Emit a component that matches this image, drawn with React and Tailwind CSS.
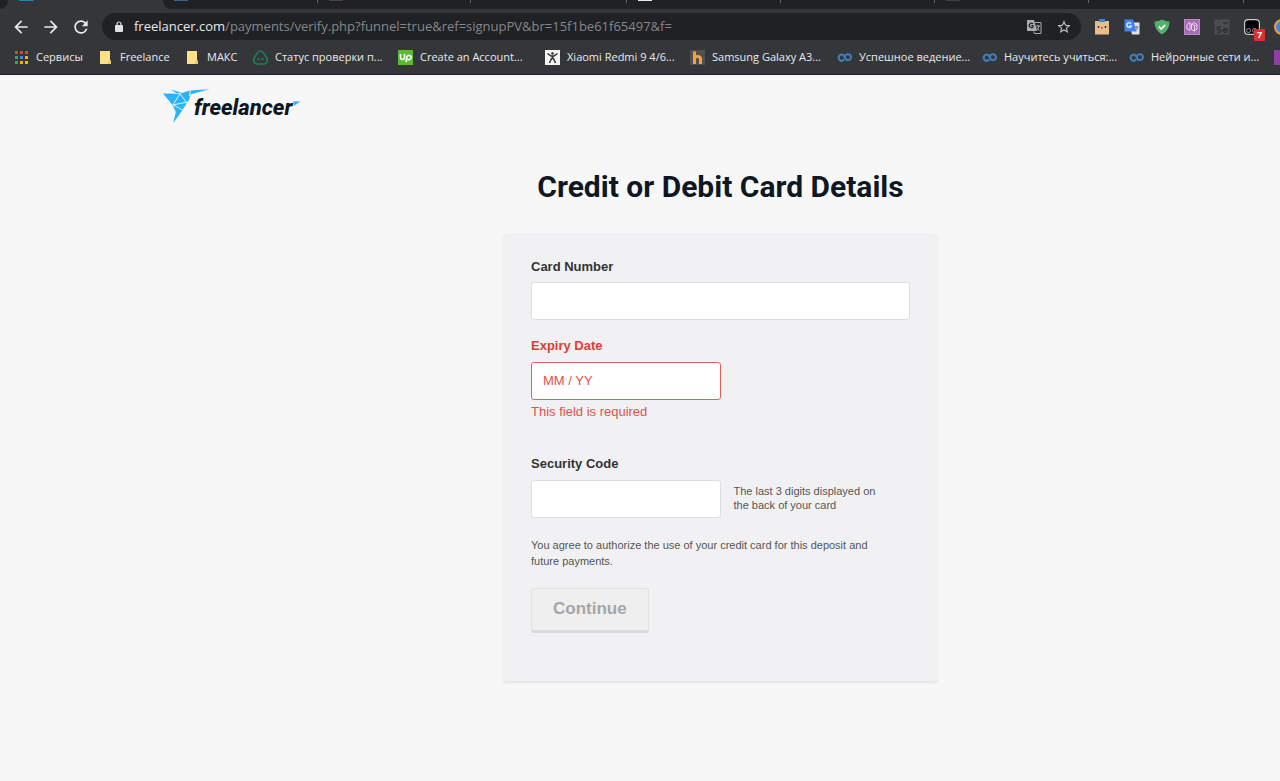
import React from 'react';
import { MdArrowBack, MdArrowForward, MdRefresh, MdStarBorder } from 'react-icons/md';

const AppsIcon = () => (
  <svg className="w-[15px] h-[15px] shrink-0" viewBox="0 0 15 15">
    <g fill="#db4437">
      <rect x="1" y="1" width="3" height="3" />
      <rect x="6" y="1" width="3" height="3" />
      <rect x="11" y="1" width="3" height="3" />
    </g>
    <rect x="1" y="6" width="3" height="3" fill="#34a853" />
    <rect x="6" y="6" width="3" height="3" fill="#4285f4" />
    <rect x="11" y="6" width="3" height="3" fill="#f4b400" />
    <rect x="1" y="11" width="3" height="3" fill="#34a853" />
    <rect x="6" y="11" width="3" height="3" fill="#f4b400" />
    <rect x="11" y="11" width="3" height="3" fill="#f4b400" />
  </svg>
);

const FolderIcon = () => (
  <svg className="w-[15px] h-[15px] shrink-0" viewBox="0 0 15 15">
    <path d="M2 1h10v9l1 1v3H2z" fill="#fbe08a" />
    <path d="M10 11h3v3h-3z" fill="#f0cd62" />
  </svg>
);

const StatusIcon = () => (
  <svg className="w-[15px] h-[15px] shrink-0 overflow-visible" viewBox="0 0 15 15" fill="none">
    <path
      d="M7.500 1C9.500 1 10.500 2.500 11.600 4.400C13 6.500 14.300 8.300 14.300 10.200C14.300 12.800 12.300 14 10 14H5C2.700 14 .7 12.800 .7 10.200C.7 8.300 2 6.500 3.400 4.400C4.500 2.500 5.500 1 7.500 1z"
      stroke="#1a7f56"
      strokeWidth="1.700"
    />
    <circle cx="5.500" cy="9" r="1.200" fill="#1a7f56" />
    <circle cx="9.500" cy="9" r="1.200" fill="#1a7f56" />
  </svg>
);

const UpworkIcon = () => (
  <svg className="w-[15px] h-[15px] shrink-0" viewBox="0 0 15 15" fill="none">
    <rect width="15" height="15" fill="#5bbc2f" />
    <path d="M2.500 4v3.500a2 2 0 0 0 4 0V4M8 12l1-5.500A2.200 2.200 0 1 1 9.500 9.200" stroke="#fff" strokeWidth="1.600" />
  </svg>
);

const FigureIcon = () => (
  <svg className="w-[15px] h-[15px] shrink-0" viewBox="0 0 15 15" fill="none">
    <rect width="15" height="15" fill="#f4f4f4" />
    <circle cx="7.500" cy="3.500" r="1.300" fill="#333" />
    <path d="M2.500 3.500L6 6h3l3.500-2.500M7.500 6v3M4.500 13L6.500 8.500h2l2 4.500" stroke="#333" strokeWidth="1.500" />
  </svg>
);

const HotlineIcon = () => (
  <svg className="w-[15px] h-[15px] shrink-0" viewBox="0 0 15 15" fill="none">
    <rect width="15" height="15" fill="#4d4f55" />
    <path d="M4.500 1.500v12.500M4.500 8.500Q4.500 6.500 7.500 6.500Q10.500 6.500 10.500 9v5" stroke="#f2a33c" strokeWidth="3" />
  </svg>
);

const CourseraIcon = () => (
  <svg className="w-[15px] h-[15px] shrink-0 overflow-visible" viewBox="0 0 15 15" fill="none">
    <path
      d="M6.800 9.800A3 3 0 1 1 6.500 5.300C8 6.800 8 8.200 9.200 9.600A3 3 0 1 0 8.400 5.600"
      stroke="#3f80bd"
      strokeWidth="2"
      strokeLinecap="round"
    />
  </svg>
);

const bookmarks = [
  { title: 'Сервисы', icon: AppsIcon, width: 'w-[84px]' },
  { title: 'Freelance', icon: FolderIcon, width: 'w-[87px]' },
  { title: 'МАКС', icon: FolderIcon, width: 'w-[68px]' },
  { title: 'Статус проверки п...', icon: StatusIcon, width: 'w-[145px]' },
  { title: 'Create an Account...', icon: UpworkIcon, width: 'w-[147px]' },
  { title: 'Xiaomi Redmi 9 4/6...', icon: FigureIcon, width: 'w-[145px]' },
  { title: 'Samsung Galaxy A3...', icon: HotlineIcon, width: 'w-[147px]' },
  { title: 'Успешное ведение...', icon: CourseraIcon, width: 'w-[145px]' },
  { title: 'Научитесь учиться:...', icon: CourseraIcon, width: 'w-[147px]' },
  { title: 'Нейронные сети и...', icon: CourseraIcon, width: 'w-[145px]' },
];

const tabs = [
  { id: 1, width: 'w-[155px]', favicon: 'bg-[#3c5f80]' },
  { id: 2, width: 'w-[153px]', favicon: 'bg-[#4a4340]' },
  { id: 3, width: 'w-[156px]', favicon: 'bg-transparent' },
  { id: 4, width: 'w-[154px]', favicon: 'bg-[#e8e8e8]' },
  { id: 5, width: 'w-[154px]', favicon: 'bg-transparent' },
  { id: 6, width: 'w-[154px]', favicon: 'bg-[#3d3e42]' },
  { id: 7, width: 'w-[155px]', favicon: 'bg-transparent' },
];

const TranslateIcon = () => (
  <svg className="w-4 h-4" viewBox="0 0 16 16" fill="none">
    <path d="M1 1h7l3 11H1z" fill="#a9adb2" />
    <path d="M9 3.500h6v11H8.500l-1-2" stroke="#a9adb2" />
    <path d="M7 4.800A2.200 2.200 0 1 0 7 8V6.500H5.200" stroke="#202124" strokeWidth="1.200" />
    <path d="M9.500 7h4.500M11.800 5.800V7M13.200 7Q12.500 9.500 10.500 11M10.800 8.500Q11.800 10.500 13.500 11.500" stroke="#a9adb2" />
  </svg>
);

const Extensions = () => (
  <div className="flex items-center gap-[14px] pl-[13px]">
    <button aria-label="Box">
      <svg className="w-4 h-4" viewBox="0 0 16 16">
        <rect x="1" y="2" width="14" height="13.500" fill="#e9bd8a" />
        <path d="M5 0h6v3H5z" fill="#2b8fe0" />
        <circle cx="4.500" cy="8" r=".9" fill="#2d2723" />
        <circle cx="11.500" cy="8" r=".9" fill="#2d2723" />
        <path d="M6.800 8.500h2.400L8 9.800z" fill="#2d2723" />
      </svg>
    </button>
    <button aria-label="Google Translate">
      <svg className="w-4 h-4" viewBox="0 0 16 16" fill="none">
        <path d="M5 3.500h10.500V15.500H8z" fill="#dfe3e8" />
        <path d="M.5 .5h8.500l3.500 12H.5z" fill="#4583ec" />
        <path d="M7 4.600A2.300 2.300 0 1 0 7.300 7H5.300" stroke="#fff" strokeWidth="1.200" />
        <path d="M10.500 8h4M12.500 7v1M13.500 8Q13 10.500 11.500 12" stroke="#6b7684" />
      </svg>
    </button>
    <button aria-label="Protection">
      <svg className="w-4 h-4" viewBox="0 0 16 16" fill="none">
        <path d="M8 .5Q11.500 2.500 15.500 2.500Q15.500 11.500 8 15.500Q.5 11.500 .5 2.500Q4.500 2.500 8 .5z" fill="#4fb268" />
        <path d="M4.800 7.500L7.200 10L11.300 5.800" stroke="#fff" strokeWidth="1.700" />
      </svg>
    </button>
    <button aria-label="Documents">
      <svg className="w-4 h-4" viewBox="0 0 16 16" fill="none">
        <rect x=".5" y=".5" width="15" height="15" fill="#a56bb4" stroke="#b98ac6" />
        <path d="M3 5.500l3-2v8L3 10zM7.500 5l2.500-1.500 3 2V10l-2.500 2-3-1.500zM7.500 5l3 1.500V12M10.500 6.500l2.500-1" stroke="#e6d3ec" />
      </svg>
    </button>
    <button aria-label="Selenium">
      <svg className="w-4 h-4" viewBox="0 0 16 16" fill="none">
        <rect x=".5" y=".5" width="15" height="15" fill="#4c4d50" />
        <path d="M7 8H4.500a1.200 1.200 0 0 0 0 2.600h1.200a1.200 1.200 0 0 1 0 2.600H3M9.500 11h4A2 2 0 1 0 12.800 12.800M9 4h5" stroke="#2f3033" strokeWidth="1.400" />
      </svg>
    </button>
    <button aria-label="Monkey scripts" className="relative">
      <svg className="w-4 h-4" viewBox="0 0 16 16" fill="none">
        <rect x=".6" y=".6" width="14.800" height="14.800" rx="3.500" fill="#000" stroke="#c9c9c9" strokeWidth="1.200" />
        <circle cx="4.500" cy="11.500" r="2" stroke="#9a9a9a" />
        <circle cx="10.500" cy="11.500" r="2" stroke="#9a9a9a" />
      </svg>
      <span className="absolute left-[10px] top-[10px] w-[11px] h-[12px] rounded-[1px] bg-[#dc2f2f] text-white text-[9px] leading-[12px] font-bold text-center">
        7
      </span>
    </button>
    <div className="w-4 h-4 shrink-0 rounded-full bg-[#4285f4] border-2 border-[#e9a23b]" />
  </div>
);

const Browser = () => (
  <header className="bg-[#35363a] border-b border-[#1f2023] overflow-hidden font-['Open_Sans','Noto_Sans',sans-serif]">
    <div className="flex h-[9px] overflow-hidden">
      <div className="w-[8px] shrink-0 bg-[#202124] rounded-br-lg" />
      <div className="w-[155px] shrink-0 pl-[11px]">
        <div className="w-[15px] h-px rounded-b-sm bg-[#2a7fb5]" />
      </div>
      <div className="flex grow bg-[#202124] rounded-bl-lg overflow-hidden">
        {tabs.map((tab) => (
          <div key={tab.id} className={`${tab.width} shrink-0 flex justify-between pl-[11px]`}>
            <div className={`w-[14px] h-px ${tab.favicon}`} />
            <div className="w-px h-[3px] bg-[#5f6368]" />
          </div>
        ))}
      </div>
    </div>

    <div className="flex items-center h-[35px] text-[#e8eaed]">
      <div className="flex items-center gap-[10px] px-[11px] shrink-0">
        <button aria-label="Back">
          <MdArrowBack className="w-5 h-5" />
        </button>
        <button aria-label="Forward">
          <MdArrowForward className="w-5 h-5" />
        </button>
        <button aria-label="Reload">
          <MdRefresh className="w-5 h-5" />
        </button>
      </div>
      <div className="flex items-center grow min-w-0 h-[27px] rounded-full bg-[#202124] pl-[12px] pr-[9px]">
        <svg className="w-[10px] h-3 shrink-0" viewBox="0 0 10 12" fill="none">
          <rect x="1" y="4" width="8" height="7" rx="1" fill="#dfe1e5" />
          <path d="M3 4.500V3a2 2 0 0 1 4 0v1.500" stroke="#dfe1e5" strokeWidth="1.200" />
        </svg>
        <div className="grow min-w-0 truncate pl-[10px] text-[13px] text-[#85888c]">
          <span className="text-[#e8eaed]">freelancer.com</span>
          /payments/verify.php?funnel=true&amp;ref=signupPV&amp;br=15f1be61f65497&amp;f=
        </div>
        <div className="flex items-center gap-[14px] shrink-0">
          <button aria-label="Translate page">
            <TranslateIcon />
          </button>
          <button aria-label="Bookmark page">
            <MdStarBorder className="w-4 h-4 text-[#c4c7cb]" />
          </button>
        </div>
      </div>
      <div className="w-[199px] shrink-0 overflow-visible">
        <Extensions />
      </div>
    </div>

    <nav className="flex h-[30px] pb-[4px] pl-[14px] text-[11px] text-[#e8eaed] whitespace-nowrap">
      {bookmarks.map((bookmark) => (
        <a key={bookmark.title} href="#" className={`${bookmark.width} shrink-0 flex items-center gap-[7px]`}>
          <bookmark.icon />
          <span>{bookmark.title}</span>
        </a>
      ))}
      <span className="self-center w-[15px] h-[15px] shrink-0 bg-[#8e3fa0]" />
    </nav>
  </header>
);

const Logo = () => (
  <a href="#" aria-label="freelancer" className="block w-[140px]">
    <svg className="w-[140px] h-[36px] block" viewBox="0 0 140 36">
      <g fill="#29b2fe">
        <path d="M7.500 1.500L19 4.800L13.500 5z" />
        <path d="M0 5.500L17 5.800L26.500 2.500L27.500 5L26.500 11L18.500 23.500L10.300 35L12.800 24L9.500 17z" />
        <path d="M26.500 2.500L46.500 1.200L27 6.500z" />
        <path d="M130 13.500L137.500 13.300L131 17.800z" />
      </g>
      <path d="M17 5.800L10 16.800L25.500 14M10 16.800L19.500 22M27.500 1.500L26.500 8M17 5.800L24 15" stroke="#f7f7f7" strokeWidth=".9" fill="none" />
      <text
        x="31"
        y="27"
        fill="#0e1724"
        className="font-['Liberation_Sans_Narrow','Roboto',sans-serif] font-extrabold italic text-[22px]"
      >
        freelancer
      </text>
    </svg>
  </a>
);

const App = () => {
  const field = 'block h-[38px] rounded-[3px] border bg-white px-[11px] text-[13px] outline-none';

  return (
    <div className="min-h-screen bg-[#f7f7f7] font-['Liberation_Sans',Arial,sans-serif]">
      <Browser />
      <div className="max-w-[954px] mx-auto pt-[13px]">
        <Logo />

        <main className="w-[435px] ml-[340px] pt-[41px] pb-24">
          <h1 className="text-center whitespace-nowrap font-['Roboto',sans-serif] font-bold text-[30px] leading-[44px] text-[#0e1724]">
            Credit or Debit Card Details
          </h1>

          <form className="mt-[24px] bg-[#f1f1f3] rounded-[3px] shadow-[0_2px_2px_#e6e6e9] px-7 pt-[24px] pb-[48px] text-[13px] leading-5 text-[#333]">
            <label htmlFor="card-number" className="block font-bold mb-[5px]">
              Card Number
            </label>
            <input id="card-number" type="text" className={`${field} w-full border-[#dedede]`} />

            <label htmlFor="expiry" className="block font-bold mt-[16px] mb-[6px] text-[#e33b32]">
              Expiry Date
            </label>
            <input
              id="expiry"
              type="text"
              placeholder="MM / YY"
              className={`${field} pb-[2px] w-1/2 border-[#e0605a] placeholder:text-[#e0504a]`}
            />
            <p className="mt-[2px] text-[#e0504a]">This field is required</p>

            <label htmlFor="security-code" className="block font-bold mt-[32px] mb-[6px]">
              Security Code
            </label>
            <div className="flex">
              <input id="security-code" type="text" className={`${field} w-1/2 border-[#dedede]`} />
              <p className="flex-1 pl-[13px] pt-[4px] pr-5 text-[11px] leading-[14px] text-[#555]">
                The last 3 digits displayed on the back of your card
              </p>
            </div>

            <p className="mt-[19px] pr-5 text-[11px] leading-4 text-[#555]">
              You agree to authorize the use of your credit card for this deposit and future payments.
            </p>

            <button
              type="button"
              className="mt-[19px] h-[45px] px-[21px] pb-[2px] rounded-[3px] border border-b-[3px] border-[#e2e2e3] border-b-[#dadadc] bg-[#efefef] text-[17px] font-bold text-[#a6a6a6]"
            >
              Continue
            </button>
          </form>
        </main>
      </div>
    </div>
  );
};

export default App;
